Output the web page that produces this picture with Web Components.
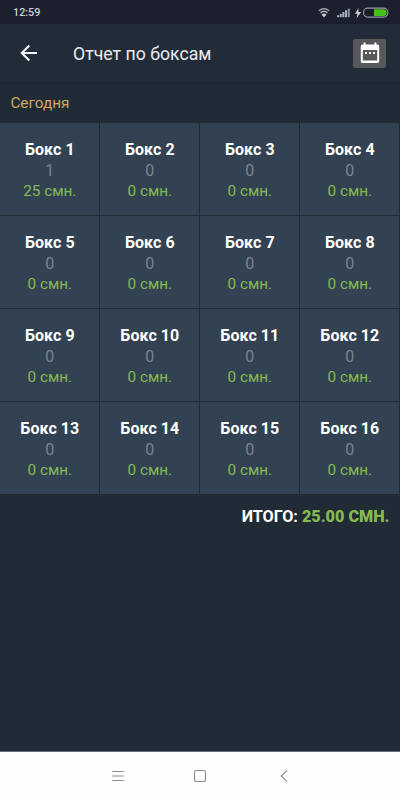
<!DOCTYPE html>
<html lang="ru">
<head>
<meta charset="utf-8">
<title>Отчет по боксам</title>
<style>
html,body{margin:0;height:100%;background:#202b36}
body{font-family:Roboto,"Noto Sans",sans-serif;overflow:hidden}
</style>
</head>
<body>
<report-app></report-app>
<script>
class BaseElement extends HTMLElement {
  connectedCallback() {
    if (!this.shadowRoot) this.attachShadow({mode: 'open'}).innerHTML = this.render();
  }
}

customElements.define('status-bar', class extends BaseElement {
  render() {
    return `<style>
:host{display:flex;height:24px;flex:none;background:#1b202c;color:#c9ced8;align-items:center;justify-content:space-between;padding:1px 11px 0 13px;box-sizing:border-box;font-size:10.8px;font-weight:500}
svg{display:block}
</style>
<span>12:59</span>
<svg width="72" height="14" viewBox="0 0 72 14">
<g fill="none" stroke="#c9ced8" stroke-width="1.4">
<path d="M1.8 4.8Q7 .6 12.2 4.8" opacity=".75"/><path d="M3.5 6.8Q7 3.9 10.5 6.8"/>
</g>
<path d="M4.5 8.6Q7 6.5 9.5 8.6L7 11.4Z" fill="#c9ced8"/>
<g fill="#aeb4c0"><rect x="20" y="9.2" width="2" height="2"/><rect x="22.7" y="7.8" width="2" height="3.4"/><rect x="25.4" y="6" width="2" height="5.2"/><rect x="28.1" y="4.2" width="2" height="7"/><rect x="30.8" y="2.6" width="2" height="8.6" opacity=".75"/></g>
<path d="M41.5 2 38 7.7h2.5L39.6 12.2l4.6-6.3h-2.8Z" fill="#c9ced8"/>
<rect x="46.6" y="2.1" width="24.2" height="9" rx="4" fill="#171c27" stroke="#969da8" stroke-width="1.1"/>
<path d="M57 3.2h9.5a3 3 0 0 1 3 3v.8a3 3 0 0 1-3 3H57Z" fill="#45c01c"/>
</svg>`;
  }
});

customElements.define('app-header', class extends BaseElement {
  render() {
    return `<style>
:host{display:flex;height:58px;flex:none;align-items:center;background:#212c38;padding:0 14px 0 18px;box-sizing:border-box;box-shadow:0 1px 2px #18222c;position:relative}
svg{display:block}
.title{flex:1;margin-left:33px;font-size:17.7px;line-height:24px;color:#e9edf2;padding-top:1px}
.date{width:33px;height:29px;border-radius:2px;background:#57585b;display:flex;align-items:center;justify-content:center}
</style>
<svg width="22" height="22" viewBox="0 0 22 22" fill="none" stroke="#f4f6f8" stroke-width="2.1"><path d="M19 11H4M11.3 3.5 3.8 11l7.5 7.5"/></svg>
<div class="title"><slot></slot></div>
<div class="date"><svg width="20" height="22" viewBox="0 0 20 22"><path fill="#fff" fill-rule="evenodd" d="M3.6 .5h2v2h8.8v-2h2v2h1A1.8 1.8 0 0 1 19.2 4.3V19.3a1.8 1.8 0 0 1-1.8 1.8H2.6A1.8 1.8 0 0 1 .8 19.3V4.3A1.8 1.8 0 0 1 2.6 2.5h1ZM2.8 8V18.6H17.2V8Z"/><path fill="#fff" d="M5 10h2v2H5zM9 10h2v2H9zM13 10h2v2h-2z"/></svg></div>`;
  }
});

customElements.define('box-cell', class extends BaseElement {
  render() {
    return `<style>
:host{display:block;background:#334252;text-align:center;font-size:16px;line-height:21px;padding:15.6px 0 0 .6px;box-sizing:border-box}
.name{color:#fff;font-weight:700;letter-spacing:.05px}.count{color:#778495}.sum{color:#88b951;font-size:15.3px}
</style>
<div class="name">${this.getAttribute('name')}</div><div class="count">${this.getAttribute('count')}</div><div class="sum">${this.getAttribute('sum')} смн.</div>`;
  }
});

customElements.define('box-grid', class extends BaseElement {
  render() {
    const cells = Array.from({length: 16}, (_, i) =>
      `<box-cell name="Бокс ${i + 1}" count="${i ? 0 : 1}" sum="${i ? 0 : 25}"></box-cell>`).join('');
    return `<style>
:host{display:grid;grid-template-columns:repeat(4,99px);grid-auto-rows:92px;gap:1px;flex:none}
</style>${cells}`;
  }
});

customElements.define('nav-bar', class extends BaseElement {
  render() {
    return `<style>
:host{display:grid;grid-template-columns:repeat(3,1fr);width:100%;height:49px;flex:none;background:#fefefe;box-sizing:border-box;border-top:1px solid #66707a;padding:0 74px;place-items:center}
svg{display:block;fill:none;stroke:#8b8b8b;stroke-width:1.1}
.menu{margin-left:4px}
</style>
<svg class="menu" width="14" height="14" viewBox="0 0 14 14"><path d="M1.3 2.5h11.4M1.3 7h11.4M1.3 11.5h11.4"/></svg>
<svg width="14" height="14" viewBox="0 0 14 14"><rect x="1.5" y="1.5" width="11" height="11" rx="2"/></svg>
<svg width="14" height="14" viewBox="0 0 14 14"><path d="M10 1.3 4.2 7l5.8 5.7"/></svg>`;
  }
});

customElements.define('report-app', class extends BaseElement {
  render() {
    return `<style>
:host{display:flex;flex-direction:column;width:400px;height:800px;background:#202b36}
.day{height:41px;flex:none;box-sizing:border-box;padding:11px 10.4px 0;font-size:15.3px;line-height:20px;color:#cfa75f}
.total{padding:12.6px 10.5px 0;text-align:right;font-size:16.2px;line-height:20px;font-weight:700;color:#fff}
.total b{color:#88b951}
nav-bar{margin-top:auto}
</style>
<status-bar></status-bar>
<app-header>Отчет по боксам</app-header>
<div class="day">Сегодня</div>
<box-grid></box-grid>
<div class="total">ИТОГО: <b>25.00 СМН.</b></div>
<nav-bar></nav-bar>`;
  }
});
</script>
</body>
</html>
